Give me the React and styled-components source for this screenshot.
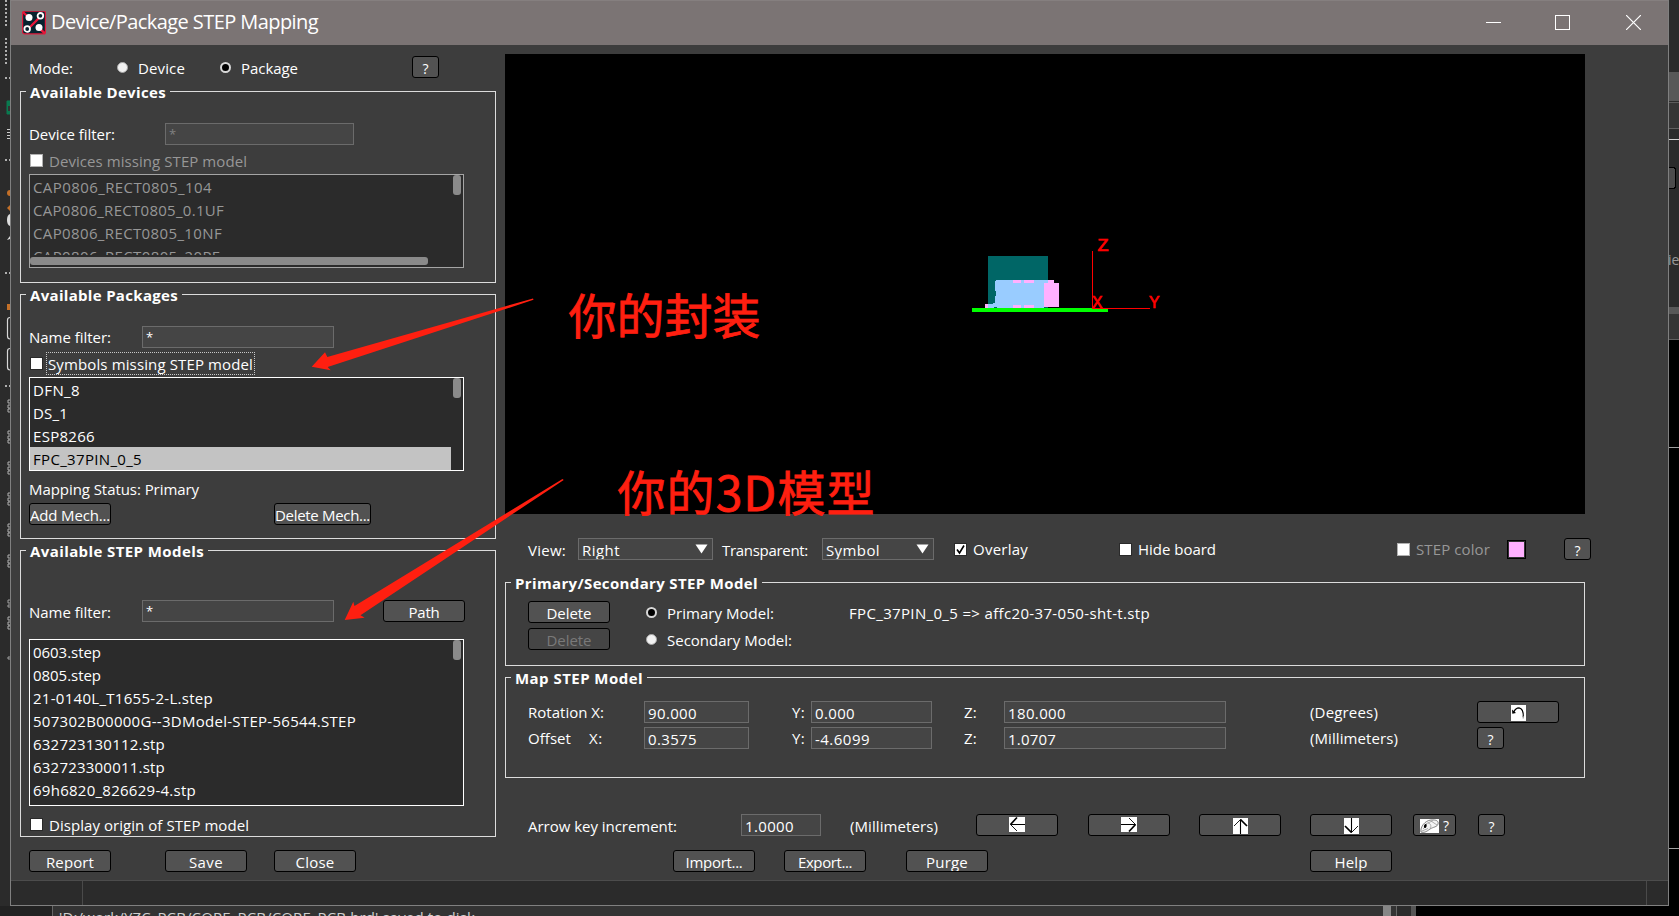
import React, { useLayoutEffect, useRef, useState } from "react";
import styled, { createGlobalStyle, css } from "styled-components";

const Global = createGlobalStyle`
  * { box-sizing: border-box; }
  html, body { margin: 0; padding: 0; background: #2b2b2b; overflow: hidden; }
  body { font-family: "Open Sans", "Noto Sans", "Noto Sans CJK SC", sans-serif; font-size: 15px; color: #fff; }
`;

/* ---------- text ---------- */
const TextSpan = styled.span`
  display: inline-block;
  white-space: pre;
  line-height: 20px;
  font-weight: ${(p) => (p.$bold ? 700 : 400)};
  color: ${(p) => p.$color || "inherit"};
`;

/* Tracks its letters so that the string takes the given width. */
function Text({ w, bold, color, children }) {
  const ref = useRef(null);
  const [spacing, setSpacing] = useState(0);
  useLayoutEffect(() => {
    if (!w || !ref.current) return;
    const natural = ref.current.getBoundingClientRect().width;
    setSpacing((w - natural) / String(children).length);
  }, []);
  return (
    <TextSpan ref={ref} $bold={bold} $color={color} style={{ letterSpacing: spacing }}>
      {children}
    </TextSpan>
  );
}

/* ---------- desktop and window ---------- */
const Desktop = styled.div`
  position: relative;
  width: 1679px;
  height: 916px;
  display: grid;
  grid-template-columns: 10px 1659px 10px;
  grid-template-rows: 906px 10px;
  overflow: hidden;
  background: #2b2b2b;
`;
const Window = styled.div`
  border: 1px solid #808080;
  border-top-color: #857f7f;
  background: #3d3d3d;
  display: flex;
  flex-direction: column;
`;
const TitleBar = styled.div`
  height: 44px;
  background: #7b7474;
  display: flex;
  align-items: center;
  padding: 0 27px 1px 11px;
`;
const Title = styled.div`
  margin-left: 5px;
  flex: 1;
  font-size: 20px;
  padding-bottom: 2px;
`;
const WinButton = styled.div`
  width: 15px;
  height: 15px;
  margin-left: ${(p) => p.$ml || 0}px;
  svg { display: block; }
`;
const Main = styled.div`
  height: 835px;
  display: grid;
  grid-template-columns: 476px 1150px;
  column-gap: 9px;
  padding-left: 9px;
`;
const Column = styled.div`
  display: flex;
  flex-direction: column;
  align-items: flex-start;
`;
const StatusBar = styled.div`
  flex: 1;
  border-top: 1px solid #4c4c4c;
  background: #2b2b2b;
  display: grid;
  grid-template-columns: 72px 1564px 1fr;
`;
const StatusCell = styled.div`
  border-right: ${(p) => (p.$last ? "none" : "1px solid #4a4a4a")};
`;

/* ---------- layout ---------- */
const Row = styled.div`
  display: grid;
  grid-template-columns: ${(p) => p.$cols || "auto"};
  height: ${(p) => p.$h || 22}px;
  margin-top: ${(p) => p.$mt || 0}px;
  padding-left: ${(p) => p.$pl || 0}px;
  align-items: center;
  justify-items: start;
  & > ${TextSpan} { margin-top: ${(p) => p.$drop ?? 2}px; }
`;
const Group = styled.fieldset`
  margin: ${(p) => p.$mt}px 0 0;
  border: 1px solid #dcdcdc;
  padding: 0 0 0 ${(p) => p.$pl}px;
  width: ${(p) => p.$w}px;
  height: ${(p) => p.$h}px;
  min-width: 0;
`;
const Legend = styled.legend`
  height: 19px;
  line-height: 19px;
  margin-left: ${(p) => p.$ml}px;
  padding: 0 4px;
  & > ${TextSpan} { line-height: 20px; vertical-align: top; }
`;
const Split = styled.div`
  display: grid;
  grid-template-columns: 61px auto;
  justify-items: start;
`;

/* ---------- controls ---------- */
const Button = styled.button`
  width: ${(p) => p.$w || 82}px;
  height: 22px;
  padding: 2px 0 0;
  border: 1px solid #000;
  border-radius: 3px;
  background: ${(p) => (p.$off ? "#454545" : "#525252")};
  color: ${(p) => (p.$off ? "#797979" : "#fff")};
  font: inherit;
  font-size: ${(p) => (p.$small ? 14 : 15)}px;
  display: flex;
  align-items: center;
  justify-content: center;
  gap: 4px;
  overflow: hidden;
  ${(p) => p.$icon && css`padding-top: 0; svg { margin-top: ${p.$icon}px; }`}
`;
const Input = styled.div`
  width: ${(p) => p.$w}px;
  height: 22px;
  border: 1px solid #6b6b6b;
  background: #454545;
  color: ${(p) => (p.$off ? "#808080" : "#fff")};
  padding-left: 3px;
  display: flex;
  align-items: center;
  justify-content: space-between;
  overflow: hidden;
  & > ${TextSpan} { margin-top: ${(p) => p.$drop ?? 2}px; }
`;
const Star = styled.span`
  font-size: 13px;
`;
const Check = styled.label`
  display: flex;
  align-items: center;
  height: 21px;
  color: ${(p) => (p.$off ? "#979797" : "#fff")};
`;
const Box = styled.span`
  width: 13px;
  height: 13px;
  background: #fff;
  border: 1px solid ${(p) => (p.$off ? "#b0b0b0" : "#2a2a2a")};
  display: flex;
`;
const CheckText = styled.span`
  height: ${(p) => (p.$focus ? 23 : 20)}px;
  margin-left: ${(p) => (p.$focus ? 3 : 5)}px;
  padding-left: 1px;
  padding-right: ${(p) => (p.$focus ? 1 : 0)}px;
  display: flex;
  align-items: center;
  border: ${(p) => (p.$focus ? "1px dotted #c8c8c8" : "none")};
`;
const RadioLabel = styled.label`
  display: flex;
  align-items: center;
  gap: 10px;
  & > ${TextSpan} { margin-top: 2px; }
`;
const RadioDot = styled.span`
  width: 11px;
  height: 11px;
  border-radius: 50%;
  background: ${(p) => (p.$on ? "#000" : "#f2f2f2")};
  border: ${(p) => (p.$on ? "2px solid #d8d8d8" : "1px solid #a9a9a9")};
  margin-top: 1px;
`;
const List = styled.div`
  width: 435px;
  height: ${(p) => p.$h}px;
  margin-top: ${(p) => p.$mt}px;
  border: 1px solid ${(p) => (p.$off ? "#a5a5a5" : "#fff")};
  background: #2b2b2b;
  color: ${(p) => (p.$off ? "#979797" : "#fff")};
  display: grid;
  grid-template-columns: 421px 12px;
  grid-template-rows: 1fr auto;
`;
const Items = styled.div`
  overflow: hidden;
  min-height: 0;
  height: ${(p) => p.$h}px;
`;
const Item = styled.div`
  height: 23px;
  padding: 2px 0 0 3px;
  background: ${(p) => (p.$selected ? "#c3c3c3" : "transparent")};
  color: ${(p) => (p.$selected ? "#000" : "inherit")};
  & > ${TextSpan} { vertical-align: top; }
`;
const VThumb = styled.div`
  margin-left: 2px;
  width: 8px;
  height: 20px;
  border-radius: 3px;
  background: #8a8a8a;
`;
const HThumb = styled.div`
  margin: 2px 0;
  width: 398px;
  height: 8px;
  border-radius: 3px;
  background: #8a8a8a;
`;
const Swatch = styled.div`
  width: 19px;
  height: 19px;
  border: 1px solid #000;
  background: #ffb0ff;
  box-shadow: inset 0 0 0 1px #333;
`;
const Viewer = styled.div`
  width: 1080px;
  height: 460px;
  margin-top: 9px;
  background: #000;
`;

/* ---------- what shows of the application behind ---------- */
const Edge = styled.div`
  overflow: hidden;
  svg { display: block; }
`;
const Footer = styled.div`
  grid-column: 1 / 4;
  display: grid;
  grid-template-columns: 52px 1331px 8px 5px 1px 14px 5px 1fr;
  overflow: hidden;
`;
const Strip = styled.div`
  background: ${(p) => p.$bg};
  border-left: ${(p) => (p.$line ? "1px solid #666" : "none")};
  padding: ${(p) => (p.$line ? "1px 0 0 6px" : 0)};
  color: #d0d0d0;
`;
const Overlay = styled.svg`
  position: absolute;
  left: 0;
  top: 0;
  pointer-events: none;
`;

function Checkbox({ text, w, off, on, focus }) {
  return (
    <Check $off={off}>
      <Box $off={off}>
        {on && (
          <svg width="11" height="11" viewBox="0 0 11 11">
            <path d="M2 5.5 L4.5 9 L9 1.5" fill="none" stroke="#000" strokeWidth="1.6" />
          </svg>
        )}
      </Box>
      <CheckText $focus={focus}>
        <Text w={w}>{text}</Text>
      </CheckText>
    </Check>
  );
}

function Radio({ text, w, on }) {
  return (
    <RadioLabel>
      <RadioDot $on={on} />
      <Text w={w}>{text}</Text>
    </RadioLabel>
  );
}

function Select({ text, w, width }) {
  return (
    <Input $w={width}>
      <Text w={w}>{text}</Text>
      <svg width="17" height="20" viewBox="0 0 17 20">
        <path d="M0.500 5.500 H12.500 L6.500 14.500 Z" fill="#fff" />
      </svg>
    </Input>
  );
}

const arrows = {
  left: [16, 15, "M16 7.5 H1.5", "M8 0.5 L1.5 7.5", "M1.5 7.5 L8 14"],
  right: [16, 15, "M0 7.5 H14.5", "M14.5 7.5 L8 14.5", "M8 1 L14.5 7.5"],
  up: [15, 16, "M7.5 16 V1.5", "M7.5 1.5 L14 8", "M7.5 1.5 L1 8"],
  down: [15, 16, "M7.5 0 V14.5", "M7.5 14.5 L1 8", "M7.5 14.5 L14 8"],
};
function ArrowIcon({ dir }) {
  const [w, h, shaft, thick, thin] = arrows[dir];
  return (
    <svg width={w} height={h} viewBox={`0 0 ${w} ${h}`}>
      <rect width={w} height={h} fill="#fff" />
      <g fill="none" stroke="#000">
        <path d={shaft} strokeWidth="1.1" />
        <path d={thick} strokeWidth="1.7" />
        <path d={thin} strokeWidth="0.9" />
      </g>
    </svg>
  );
}
function RotateIcon() {
  return (
    <svg width="15" height="16" viewBox="0 0 15 16">
      <rect width="15" height="16" fill="#fff" />
      <path d="M2.8 7 Q4.5 2.8 8 2.8 Q12.6 3.5 12.3 12" fill="none" stroke="#000" strokeWidth="1.2" />
      <path d="M12.2 11 V13.5" stroke="#999" strokeWidth="1.2" />
      <path d="M1 4.5 L1.3 8.8 L5 8 Z" fill="#000" />
    </svg>
  );
}
function MouseIcon() {
  return (
    <svg width="19" height="14" viewBox="0 0 19 14">
      <rect width="19" height="14" fill="#fff" />
      <path d="M1 13 C0 8 5 1.5 11 1 C16 0.5 19 2 18 5 C17.5 8 13 8 10 10 C6 13 4 14 1 13 Z" fill="#f4f4f4" stroke="#777" strokeWidth="0.9" />
      <path d="M3 10 C6 8 5 4 8 4 C10 4 12 7 10 9 M11 2 L17 6 M8 4 L13 1.5 M2 12 L8 9.5" fill="none" stroke="#999" strokeWidth="0.8" />
      <ellipse cx="5.3" cy="7" rx="1.3" ry="2" fill="#000" transform="rotate(20 5.3 7)" />
    </svg>
  );
}
function Logo() {
  return (
    <svg width="24" height="24" viewBox="0 0 24 24">
      <rect x="0.6" y="0.1" width="22.8" height="22.8" rx="2" fill="#06232f" stroke="#e01b3c" strokeWidth="1.2" />
      <path d="M1 1 L6 6 M17.5 6.5 L6 18 M17 17 L23 22.500" stroke="#e8173a" strokeWidth="2.4" />
      <circle cx="7" cy="6.5" r="3.5" fill="#fff" />
      <circle cx="17" cy="16.5" r="3.5" fill="#fff" />
      <circle cx="18.4" cy="4.8" r="2.8" fill="#06232f" stroke="#fff" strokeWidth="1.8" />
      <circle cx="5.2" cy="18" r="2.8" fill="#06232f" stroke="#fff" strokeWidth="1.8" />
    </svg>
  );
}

function Scene() {
  return (
    <svg width="1080" height="460" viewBox="505 54 1080 460">
      <g shapeRendering="crispEdges">
        <rect x="988" y="256" width="60" height="52" fill="#006666" />
        <path d="M996 280 V281 H995 V291 H996 V296 H995 V303 H993 V304 H988 V308 H994 V307 H997 V308 H1044 V283 H1048 V280 Z" fill="#99ccff" />
        <g fill="#ffb0ff">
          <rect x="985" y="304" width="3" height="4" />
          <rect x="1013" y="280" width="8" height="3" />
          <rect x="1024" y="280" width="10" height="3" />
          <rect x="1048" y="280" width="6" height="3" />
          <rect x="1044" y="283" width="15" height="24" />
          <rect x="1013" y="305" width="8" height="3" />
          <rect x="1024" y="305" width="10" height="3" />
        </g>
        <rect x="972" y="308" width="136" height="4" fill="#00ff00" />
        <g fill="#ff0000">
          <rect x="1092" y="251" width="1" height="58" />
          <rect x="1092" y="308" width="58" height="1" />
        </g>
      </g>
      <g fill="#ff0000" stroke="#ff0000" strokeWidth="0.7" fontFamily="Liberation Sans" fontSize="16">
        <text x="1097.500" y="250.500" textLength="11" lengthAdjust="spacingAndGlyphs">Z</text>
        <text x="1092" y="308" textLength="10.500" lengthAdjust="spacingAndGlyphs">X</text>
        <text x="1149" y="308" textLength="10.500" lengthAdjust="spacingAndGlyphs">Y</text>
      </g>
    </svg>
  );
}

function LeftEdge() {
  const clusters = [399, 430, 461, 492, 523, 554, 616];
  return (
    <svg width="10" height="906" viewBox="0 0 10 906">
      <rect width="10" height="906" fill="#2b2b2b" />
      <g stroke="#b0b0b0" strokeWidth="2" strokeDasharray="2 2">
        <path d="M6 0 V26 M6 38 V64" />
        <path d="M5 78 H10 M5 160 H10 M5 273 H10 M5 386 H10" />
      </g>
      <path d="M10 101 H7 V114 H10" fill="#0a7a50" stroke="#0a7a50" />
      <rect x="8" y="106" width="2" height="5" fill="#333" />
      <path d="M7 129.5 H10 M7 132.5 H10 M7 135.5 H10 M7 138.5 H10" stroke="#ccc" />
      <circle cx="10" cy="193" r="3" fill="#c47028" />
      <path d="M7 208 L10 205 V211 Z" fill="#c47028" />
      <path d="M10 214 Q7 215 7 220 Q7 225 10 226" fill="#ddd" />
      <path d="M7 240 L10 236 V239 Z" fill="#ddd" />
      <rect x="7" y="304" width="3" height="6" fill="#c47028" />
      <path d="M10 317.5 Q7.5 317.5 7.5 320 V336 Q7.5 339 10 339 M10 348.5 Q7.5 348.5 7.5 351 V367 Q7.5 370 10 370" fill="none" stroke="#d8d8d8" strokeWidth="1.2" />
      {clusters.map((y) => (
        <path key={y} d={`M10 ${y + 1} H8 V${y + 4} H10 M10 ${y + 6} H8 V${y + 9} H10 M10 ${y + 10} H8 V${y + 13} H10`} fill="none" stroke="#b0b0b0" />
      ))}
      <path d="M10 600 H8 V603 H10 M10 605 H8 V607 H10 M10 657 H8 V659 H10" fill="none" stroke="#a0a0a0" />
    </svg>
  );
}

function RightEdge() {
  return (
    <svg width="10" height="906" viewBox="0 0 10 906" shapeRendering="crispEdges">
      <rect width="10" height="340" fill="#2b2b2b" />
      <rect y="340" width="10" height="566" fill="#000" />
      <rect y="72" width="10" height="29" fill="#585858" />
      <rect y="102" width="10" height="1" fill="#5c5c5c" />
      <rect y="103" width="10" height="25" fill="#353535" />
      <rect y="128" width="10" height="1" fill="#606060" />
      <rect y="139" width="10" height="1" fill="#d0d0d0" />
      <path d="M0 167.5 H5 L6.500 169 V187 L5 188.500 H0" fill="#4c4c4c" stroke="#000" />
      <text x="-1" y="265" fontSize="14" fill="#9a9a9a">ie</text>
      <rect y="307" width="10" height="7" fill="#585858" />
      <rect y="314" width="10" height="25" fill="#353535" />
      <rect y="339" width="10" height="1" fill="#606060" />
      <rect y="447" width="10" height="1" fill="#a0a0a0" />
      <rect y="848" width="10" height="1" fill="#a0a0a0" />
    </svg>
  );
}

const devices = [
  ["CAP0806_RECT0805_104", 179],
  ["CAP0806_RECT0805_0.1UF", 191],
  ["CAP0806_RECT0805_10NF", 189],
  ["CAP0806_RECT0805_20PF", 187],
];
const packages = [
  ["DFN_8", 47],
  ["DS_1", 35],
  ["ESP8266", 62],
  ["FPC_37PIN_0_5", 109],
];
const models = [
  ["0603.step", 68],
  ["0805.step", 68],
  ["21-0140L_T1655-2-L.step", 180],
  ["507302B00000G--3DModel-STEP-56544.STEP", 323],
  ["632723130112.stp", 132],
  ["632723300011.stp", 132],
  ["69h6820_826629-4.stp", 163],
];

function ListBox({ items, h, mt, off, selected, hscroll }) {
  return (
    <List $h={h} $mt={mt} $off={off}>
      <Items $h={hscroll ? h - 14 : h - 2}>
        {items.map(([t, w], i) => (
          <Item key={t} $selected={selected === i}>
            <Text w={w}>{t}</Text>
          </Item>
        ))}
      </Items>
      <VThumb />
      {hscroll && <HThumb />}
    </List>
  );
}

function TransformRow({ mt, label, x, y, z, unit, children }) {
  return (
    <Row $mt={mt} $drop={0} $cols="116px 148px 19px 153px 40px 306px 167px auto">
      {label}
      <Input $w={105} $drop={1}><Text w={x[1]}>{x[0]}</Text></Input>
      <Text w={13}>Y:</Text>
      <Input $w={121} $drop={1}><Text w={y[1]}>{y[0]}</Text></Input>
      <Text w={13}>Z:</Text>
      <Input $w={222} $drop={1}><Text w={z[1]}>{z[0]}</Text></Input>
      <Text w={unit[1]}>{unit[0]}</Text>
      {children}
    </Row>
  );
}

export default function App() {
  return (
    <Desktop>
      <Global />
      <Edge><LeftEdge /></Edge>
      <Window>
        <TitleBar>
          <Logo />
          <Title><Text w={267}>Device/Package STEP Mapping</Text></Title>
          <WinButton>
            <svg width="15" height="15"><path d="M0 7.5 H15" stroke="#fff" /></svg>
          </WinButton>
          <WinButton $ml={54}>
            <svg width="15" height="15"><rect x="0.5" y="0.5" width="14" height="14" fill="none" stroke="#fff" /></svg>
          </WinButton>
          <WinButton $ml={56}>
            <svg width="15" height="15"><path d="M0 0 L15 15 M15 0 L0 15" stroke="#fff" strokeWidth="1.2" /></svg>
          </WinButton>
        </TitleBar>

        <Main>
          <Column>
            <Row $mt={11} $pl={9} $cols="88px 103px 192px auto">
              <Text w={44}>Mode:</Text>
              <Radio text="Device" w={47} />
              <Radio text="Package" w={57} on />
              <Button $w={27} $small>?</Button>
            </Row>

            <Group $mt={4} $w={476} $h={201} $pl={8}>
              <Legend $ml={-3}><Text w={136} bold>Available Devices</Text></Legend>
              <Row $mt={22} $drop={0} $cols="136px auto">
                <Text w={86}>Device filter:</Text>
                <Input $w={189} $off><Star>*</Star></Input>
              </Row>
              <Row $mt={5} $h={21} $pl={1}>
                <Checkbox text="Devices missing STEP model" w={198} off />
              </Row>
              <ListBox items={devices} h={94} mt={3} off hscroll />
            </Group>

            <Group $mt={2} $w={476} $h={254} $pl={8}>
              <Legend $ml={-3}><Text w={148} bold>Available Packages</Text></Legend>
              <Row $mt={22} $drop={0} $cols="113px auto">
                <Text w={82}>Name filter:</Text>
                <Input $w={192}><Star>*</Star></Input>
              </Row>
              <Row $mt={5} $h={21} $pl={1}>
                <Checkbox text="Symbols missing STEP model" w={205} focus />
              </Row>
              <ListBox items={packages} h={94} mt={3} selected={3} />
              <Row $mt={6}><Text w={170}>Mapping Status: Primary</Text></Row>
              <Row $mt={4} $cols="245px auto">
                <Button><Text w={80}>Add Mech...</Text></Button>
                <Button $w={97}><Text w={95}>Delete Mech...</Text></Button>
              </Row>
            </Group>

            <Group $mt={2} $w={476} $h={296} $pl={8}>
              <Legend $ml={-3}><Text w={174} bold>Available STEP Models</Text></Legend>
              <Row $mt={40} $drop={1} $cols="113px 241px auto">
                <Text w={82}>Name filter:</Text>
                <Input $w={192}><Star>*</Star></Input>
                <Button><Text w={31}>Path</Text></Button>
              </Row>
              <ListBox items={models} h={167} mt={17} />
              <Row $mt={8} $h={21} $pl={1}>
                <Checkbox text="Display origin of STEP model" w={200} />
              </Row>
            </Group>

            <Row $mt={13} $pl={9} $cols="136px 109px auto">
              <Button><Text w={48}>Report</Text></Button>
              <Button><Text w={34}>Save</Text></Button>
              <Button><Text w={39}>Close</Text></Button>
            </Row>
          </Column>

          <Column>
            <Viewer><Scene /></Viewer>

            <Row $mt={24} $pl={23} $cols="50px 144px 100px 132px 165px 278px 110px 57px auto">
              <Text w={38}>View:</Text>
              <Select text="Right" w={38} width={135} />
              <Text w={86}>Transparent:</Text>
              <Select text="Symbol" w={54} width={112} />
              <Checkbox text="Overlay" w={55} on />
              <Checkbox text="Hide board" w={78} />
              <Checkbox text="STEP color" w={74} off />
              <Swatch />
              <Button $w={27} $small>?</Button>
            </Row>

            <Group $mt={13} $w={1080} $h={93} $pl={22}>
              <Legend $ml={-17}><Text w={243} bold>Primary/Secondary STEP Model</Text></Legend>
              <Row $mt={9} $drop={1} $cols="118px 203px auto">
                <Button><Text w={45}>Delete</Text></Button>
                <Radio text="Primary Model:" w={107} on />
                <Text w={301}>FPC_37PIN_0_5 =&gt; affc20-37-050-sht-t.stp</Text>
              </Row>
              <Row $mt={5} $cols="118px auto">
                <Button $off><Text w={45}>Delete</Text></Button>
                <Radio text="Secondary Model:" w={125} />
              </Row>
            </Group>

            <Group $mt={2} $w={1080} $h={110} $pl={22}>
              <Legend $ml={-17}><Text w={128} bold>Map STEP Model</Text></Legend>
              <TransformRow
                mt={14}
                label={<Text w={76}>Rotation X:</Text>}
                x={["90.000", 49]} y={["0.000", 40]} z={["180.000", 58]}
                unit={["(Degrees)", 68]}
              >
                <Button $icon={1}><RotateIcon /></Button>
              </TransformRow>
              <TransformRow
                mt={4}
                label={<Split><Text w={43}>Offset</Text><Text w={14}>X:</Text></Split>}
                x={["0.3575", 49]} y={["-4.6099", 55]} z={["1.0707", 48]}
                unit={["(Millimeters)", 88]}
              >
                <Button $w={27} $small>?</Button>
              </TransformRow>
            </Group>

            <Row $mt={36} $pl={23} $drop={1} $cols="213px 109px 126px 112px 111px 111px 103px 65px auto">
              <Text w={149}>Arrow key increment:</Text>
              <Input $w={80} $drop={1}><Text w={49}>1.0000</Text></Input>
              <Text w={88}>(Millimeters)</Text>
              <Button $icon={-1}><ArrowIcon dir="left" /></Button>
              <Button $icon={-1}><ArrowIcon dir="right" /></Button>
              <Button $icon={1}><ArrowIcon dir="up" /></Button>
              <Button $icon={1}><ArrowIcon dir="down" /></Button>
              <Button $w={43} $icon={1} $small><MouseIcon />?</Button>
              <Button $w={27} $small>?</Button>
            </Row>

            <Row $mt={14} $pl={168} $cols="111px 122px 404px auto">
              <Button><Text w={57}>Import...</Text></Button>
              <Button><Text w={54}>Export...</Text></Button>
              <Button><Text w={42}>Purge</Text></Button>
              <Button><Text w={33}>Help</Text></Button>
            </Row>
          </Column>
        </Main>

        <StatusBar>
          <StatusCell />
          <StatusCell />
          <StatusCell $last />
        </StatusBar>
      </Window>
      <Edge><RightEdge /></Edge>

      <Footer>
        <Strip $bg="#222" />
        <Strip $bg="#333" $line>
          <Text w={420}>'D:/work/YZC_PCB/CORE_PCB/CORE_PCB.brd' saved to disk.</Text>
        </Strip>
        <Strip $bg="#868686" />
        <Strip $bg="#333" />
        <Strip $bg="#666" />
        <Strip $bg="#2b2b2b" />
        <Strip $bg="#555" />
        <Strip $bg="#000" />
      </Footer>

      <Overlay width="1679" height="916" viewBox="0 0 1679 916">
        <g fill="#ff1f10">
          <path d="M311.700 366.700 L325 352.300 L327.300 357 L533 298.500 L533.500 299.800 L327.700 367 L330.700 370.300 Z" />
          <path d="M344.700 620 L353.300 601.700 L354.500 606 L562.500 479 L563.700 480 L360.500 615.300 L364.700 617.700 Z" />
          <g fontFamily="Noto Sans CJK SC" fontSize="48" stroke="#ff1f10" strokeWidth="0.8">
            <text x="568.500" y="334">你的封装</text>
            <text x="617.500" y="510.500" textLength="257">你的3D模型</text>
          </g>
        </g>
      </Overlay>
    </Desktop>
  );
}
